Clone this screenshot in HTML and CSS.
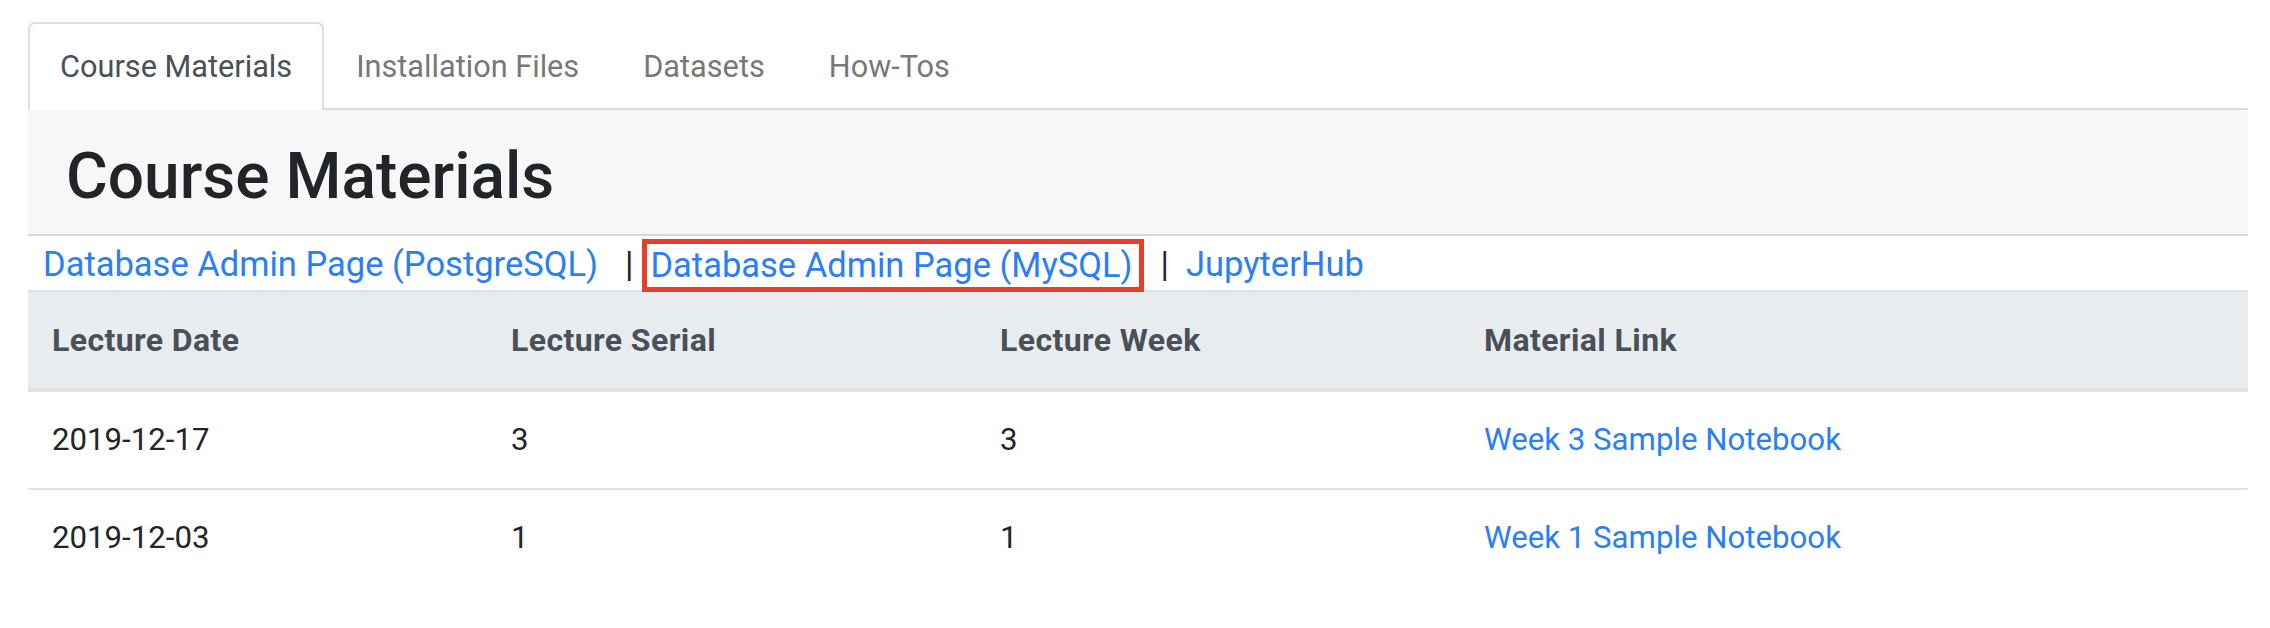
FILE: index.html
```html
<!DOCTYPE html>
<html lang="en">
<head>
<meta charset="utf-8">
<title>Course Materials</title>
<link rel="stylesheet" href="styles.css">
</head>
<body>
<div class="page">
  <nav class="tabs">
    <a class="tab active" href="#">Course Materials</a>
    <a class="tab" href="#">Installation Files</a>
    <a class="tab" href="#">Datasets</a>
    <a class="tab" href="#">How-Tos</a>
  </nav>
  <section class="panel">
    <header class="hero"><h1 class="hero-title">Course Materials</h1></header>
    <div class="links">
      <a class="link" href="#">Database Admin Page (PostgreSQL)</a>
      <span class="sep">|</span>
      <span class="highlight"><a class="link" href="#">Database Admin Page (MySQL)</a></span>
      <span class="sep">|</span>
      <a class="link" href="#">JupyterHub</a>
    </div>
    <table class="materials">
      <colgroup>
        <col class="c1"><col class="c2"><col class="c3"><col class="c4">
      </colgroup>
      <thead>
        <tr><th>Lecture Date</th><th>Lecture Serial</th><th>Lecture Week</th><th>Material Link</th></tr>
      </thead>
      <tbody>
        <tr><td>2019-12-17</td><td>3</td><td>3</td><td><a class="link" href="#">Week 3 Sample Notebook</a></td></tr>
        <tr><td>2019-12-03</td><td>1</td><td>1</td><td><a class="link" href="#">Week 1 Sample Notebook</a></td></tr>
      </tbody>
    </table>
  </section>
</div>
</body>
</html>
```
FILE: styles.css
```css
* { box-sizing: border-box; }
body {
  margin: 0;
  background: #fff;
  font-family: Roboto, "Liberation Sans", Arial, sans-serif;
  color: #212529;
}
.page { padding: 22px 22px 0 28px; }

.tabs {
  display: flex;
  height: 88px;
  border-bottom: 2px solid #dcdcdc;
}
.tab {
  display: block;
  height: 88px;
  padding: 0 30px;
  border: 2px solid transparent;
  border-bottom: 0;
  font-size: 30.7px;
  line-height: 86px;
  color: #787878;
  text-decoration: none;
  white-space: nowrap;
}
.tab.active {
  background: #fff;
  border-color: #dedede;
  border-radius: 7px 7px 0 0;
  color: #495057;
}

.hero {
  height: 126px;
  padding-left: 38px;
  background: #f7f7f7;
  border-bottom: 2px solid #d9d9d9;
  border-top-right-radius: 6px;
}
.hero-title {
  margin: 0;
  padding-top: 10px;
  font-size: 64px;
  font-weight: 500;
  line-height: 114px;
  color: #212529;
}

.links {
  display: flex;
  align-items: flex-start;
  height: 54px;
  padding: 2px 0 0 15px;
  font-size: 34.5px;
  line-height: 52px;
}
.link { color: #2a7ef6; text-decoration: none; white-space: nowrap; }
.sep { color: #212529; margin: 0 9px 0 27px; }
.highlight {
  display: block;
  margin: 1px 0 -2px 0;
  height: 53px;
  padding: 0 6px 0 3px;
  border: 5px solid #e63e2b;
  line-height: 43px;
}
.highlight + .sep { margin: 0 17px 0 17px; }

.materials {
  width: 2220px;
  border-collapse: separate;
  border-spacing: 0;
  font-size: 31.2px;
  line-height: 48px;
  table-layout: fixed;
}
.c1 { width: 459px; }
.c2 { width: 489px; }
.c3 { width: 484px; }
.c4 { width: 788px; }
.materials th, .materials td {
  padding: 24px;
  text-align: left;
  vertical-align: middle;
  border-top: 2px solid #dee2e6;
  white-space: nowrap;
}
.materials th {
  background: #e9ecef;
  color: #495057;
  font-size: 32px;
  font-weight: 700;
  letter-spacing: 0.4px;
  border-bottom: 2px solid #dee2e6;
}
.materials td { color: #212529; }
```
